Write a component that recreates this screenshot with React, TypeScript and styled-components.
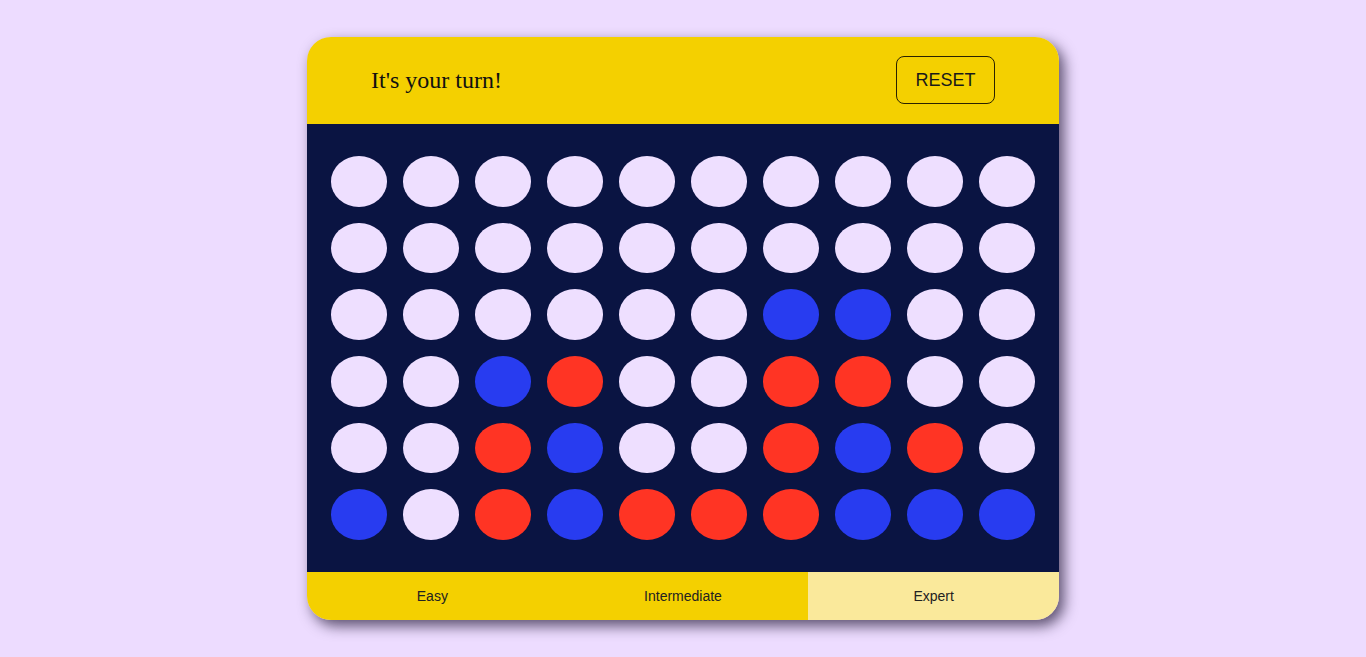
import React from 'react';
import styled, { createGlobalStyle } from 'styled-components';

const GlobalStyle = createGlobalStyle`
  html, body {
    margin: 0;
    padding: 0;
    background: #eddcff;
  }
  body {
    font-family: "Liberation Serif", "Times New Roman", serif;
  }
`;

type Cell = 0 | 1 | 2;

// 0 = empty, 1 = blue, 2 = red
const board: Cell[][] = [
  [0, 0, 0, 0, 0, 0, 0, 0, 0, 0],
  [0, 0, 0, 0, 0, 0, 0, 0, 0, 0],
  [0, 0, 0, 0, 0, 0, 1, 1, 0, 0],
  [0, 0, 1, 2, 0, 0, 2, 2, 0, 0],
  [0, 0, 2, 1, 0, 0, 2, 1, 2, 0],
  [1, 0, 2, 1, 2, 2, 2, 1, 1, 1],
];

const cellColors: Record<Cell, string> = {
  0: '#eedfff',
  1: '#283cf0',
  2: '#ff3424',
};

const Page = styled.div`
  min-height: 657px;
  display: flex;
  justify-content: center;
  padding-top: 37px;
  box-sizing: border-box;
`;

const Card = styled.div`
  width: 752px;
  height: 583px;
  border-radius: 24px;
  overflow: hidden;
  display: flex;
  flex-direction: column;
  box-shadow: 5px 6px 14px rgba(30, 20, 50, 0.7);
`;

const Header = styled.div`
  height: 87px;
  flex-shrink: 0;
  background: #f4d000;
  display: flex;
  align-items: center;
  justify-content: space-between;
  padding: 0 64px;
`;

const Status = styled.h2`
  margin: 0;
  font-family: "Liberation Serif", "Times New Roman", serif;
  font-weight: normal;
  font-size: 24px;
  color: #111;
`;

const ResetButton = styled.button`
  width: 99px;
  height: 48px;
  margin-top: -1px;
  border: 1px solid #2a2200;
  border-radius: 8px;
  background: transparent;
  font-family: "Liberation Sans", Arial, sans-serif;
  font-size: 18px;
  color: #1a1a1a;
  cursor: pointer;
`;

const Board = styled.div`
  flex: 1;
  background: #0a1442;
  padding: 32px 24px;
  display: grid;
  grid-template-columns: repeat(10, 56px);
  grid-template-rows: repeat(6, 1fr);
  column-gap: 16px;
  row-gap: 16px;
`;

const Disc = styled.div<{ $color: string }>`
  border-radius: 50%;
  background: ${(p) => p.$color};
`;

const Footer = styled.div`
  height: 48px;
  flex-shrink: 0;
  display: grid;
  grid-template-columns: repeat(3, 1fr);
`;

const LevelButton = styled.button<{ $active?: boolean }>`
  border: none;
  margin: 0;
  background: ${(p) => (p.$active ? '#fae99b' : '#f4d000')};
  font-family: "Liberation Sans", Arial, sans-serif;
  font-size: 14px;
  color: #222;
  cursor: pointer;
`;

export default function App() {
  return (
    <>
      <GlobalStyle />
      <Page>
        <Card>
          <Header>
            <Status>It's your turn!</Status>
            <ResetButton>RESET</ResetButton>
          </Header>
          <Board>
            {board.map((row, r) =>
              row.map((cell, c) => <Disc key={`${r}-${c}`} $color={cellColors[cell]} />),
            )}
          </Board>
          <Footer>
            <LevelButton>Easy</LevelButton>
            <LevelButton>Intermediate</LevelButton>
            <LevelButton $active>Expert</LevelButton>
          </Footer>
        </Card>
      </Page>
    </>
  );
}
